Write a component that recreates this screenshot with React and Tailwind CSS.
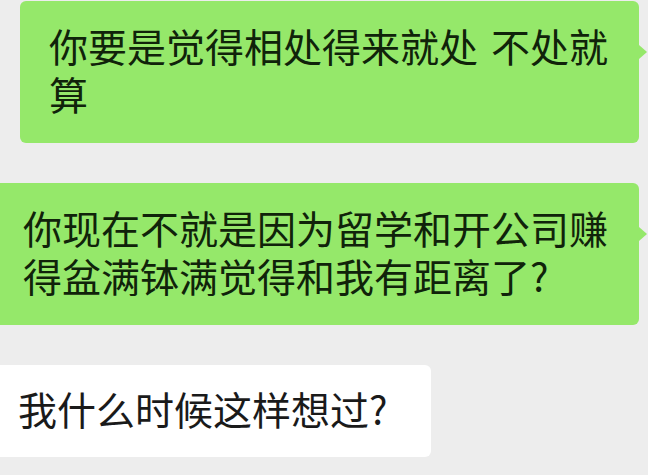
import React from "react";

const font = { fontFamily: '"Noto Sans CJK SC", "Noto Sans", sans-serif' };

function GreenBubble({ children, pl = "pl-[31px]" }) {
  return (
    <div
      className={`relative shrink-0 whitespace-nowrap rounded-[6px] bg-[#95e86a] pb-[26px] pr-[31px] pt-[20px] text-[39px] leading-[48px] text-[#10230a] ${pl}`}
    >
      {children}
      <span className="absolute right-[-8px] top-[44px] h-0 w-0 border-y-[7px] border-l-[8px] border-y-transparent border-l-[#95e86a]" />
    </div>
  );
}

export default function App() {
  return (
    <div
      className="flex h-[475px] w-full flex-col items-end gap-[40px] overflow-hidden bg-[#ededed] pr-[9px] pt-[1px]"
      style={font}
    >
      <GreenBubble pl="pl-[29px]">
        你要是觉得相处得来就处<span className="ml-[13px]">不处就</span>
        <br />
        算
      </GreenBubble>
      <GreenBubble>
        你现在不就是因为留学和开公司赚
        <br />
        得盆满钵满觉得和我有距离了?
      </GreenBubble>
      <div className="relative ml-[-13px] shrink-0 self-start whitespace-nowrap rounded-[6px] bg-white pb-[25px] pl-[31px] pr-[43px] pt-[19px] text-[39px] leading-[48px] text-[#1a1a1a]">
        我什么时候这样想过?
      </div>
    </div>
  );
}
